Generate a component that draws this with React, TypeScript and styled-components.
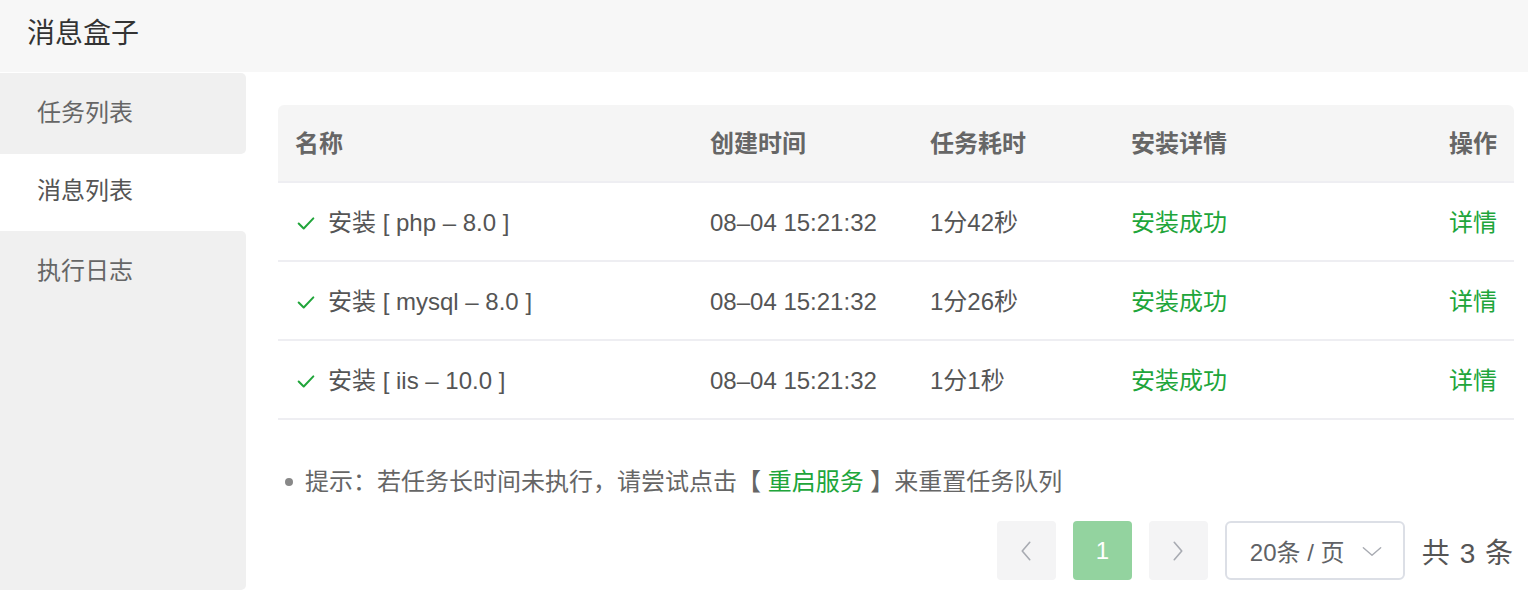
import styled, { createGlobalStyle } from 'styled-components'

const GREEN = '#20a53a'

const GlobalStyle = createGlobalStyle`
    html, body {
        margin: 0;
        padding: 0;
        background: #ffffff;
        overflow: hidden;
    }
    * {
        box-sizing: border-box;
    }
    body {
        font-family: "Liberation Sans", "Noto Sans CJK SC", sans-serif;
        color: #666666;
    }
`

interface Task {
    name: string
    created: string
    cost: string
}

const tasks: Task[] = [
    { name: '安装 [ php – 8.0 ]', created: '08–04 15:21:32', cost: '1分42秒' },
    { name: '安装 [ mysql – 8.0 ]', created: '08–04 15:21:32', cost: '1分26秒' },
    { name: '安装 [ iis – 10.0 ]', created: '08–04 15:21:32', cost: '1分1秒' },
]

const menu = ['任务列表', '消息列表', '执行日志']

const CheckIcon = () => (
    <svg width="22" height="22" viewBox="0 0 24 24" fill="none" stroke={GREEN} strokeWidth="2.2" strokeLinecap="round" strokeLinejoin="round">
        <polyline points="4 12.5 9.5 18 20 7" />
    </svg>
)

const Chevron = ({ dir, size = 30 }: { dir: 'left' | 'right' | 'down'; size?: number }) => {
    const points = dir === 'left' ? '15 5 9 12 15 19' : dir === 'right' ? '9 5 15 12 9 19' : '4 9 12 16 20 9'
    return (
        <svg width={size} height={size} viewBox="0 0 24 24" fill="none" stroke="#a8abb2" strokeWidth="1.3" strokeLinecap="round" strokeLinejoin="round">
            <polyline points={points} />
        </svg>
    )
}

const App = () => {
    return (<Page>
        <GlobalStyle />
        <TopBar>消息盒子</TopBar>
        <Body>
            <Sidebar>
                {menu.map((item, i) => (
                    <MenuItem key={item} $active={i === 1} $last={i === menu.length - 1}>{item}</MenuItem>
                ))}
            </Sidebar>
            <Main>
                <Table>
                    <HeadRow>
                        <HeadCell>名称</HeadCell>
                        <HeadCell>创建时间</HeadCell>
                        <HeadCell>任务耗时</HeadCell>
                        <HeadCell>安装详情</HeadCell>
                        <HeadCell $right>操作</HeadCell>
                    </HeadRow>
                    {tasks.map(t => (
                        <Row key={t.name}>
                            <Cell>
                                <CheckIcon />
                                <span>{t.name}</span>
                            </Cell>
                            <Cell>{t.created}</Cell>
                            <Cell>{t.cost}</Cell>
                            <Cell $green>安装成功</Cell>
                            <Cell $green $right>详情</Cell>
                        </Row>
                    ))}
                </Table>
                <Tip>
                    <Dot />
                    提示：若任务长时间未执行，请尝试点击【 <Link>重启服务</Link> 】来重置任务队列
                </Tip>
                <Pager>
                    <PageBtn><Chevron dir="left" /></PageBtn>
                    <PageBtn $current>1</PageBtn>
                    <PageBtn><Chevron dir="right" /></PageBtn>
                    <SizeSelect>
                        <span>20条 / 页</span>
                        <Chevron dir="down" size={26} />
                    </SizeSelect>
                    <Total>共 3 条</Total>
                </Pager>
            </Main>
        </Body>
    </Page>)
}

const Page = styled.div`
    display: flex;
    flex-direction: column;
    width: 1528px;
    height: 590px;
`
const TopBar = styled.div`
    height: 72px;
    flex-shrink: 0;
    display: flex;
    align-items: center;
    padding: 0 0 10px 27px;
    background: #f7f7f7;
    color: #333333;
    font-size: 28px;
`
const Body = styled.div`
    flex: 1;
    display: flex;
    min-height: 0;
    padding-top: 1px;
`
const Sidebar = styled.div`
    width: 246px;
    flex-shrink: 0;
    display: flex;
    flex-direction: column;
    background: #ffffff;
`
const MenuItem = styled.div<{ $active?: boolean; $last?: boolean }>`
    height: ${p => (p.$active ? '77px' : '81px')};
    flex: ${p => (p.$last ? '1' : 'none')};
    padding: ${p => (p.$active ? '21px' : '24px')} 0 0 37px;
    font-size: 24px;
    line-height: 32px;
    color: ${p => (p.$active ? '#555555' : '#666666')};
    background: ${p => (p.$active ? '#ffffff' : '#f0f0f0')};
    border-radius: 0 5px 5px 0;
`
const Main = styled.div`
    flex: 1;
    display: flex;
    flex-direction: column;
    padding: 32px 14px 0 32px;
`
const Table = styled.div`
    display: flex;
    flex-direction: column;
`
const columns = `
    display: grid;
    grid-template-columns: 415px 220px 201px 1fr 120px;
`
const HeadRow = styled.div`
    ${columns}
    height: 78px;
    background: #f5f5f5;
    border-radius: 6px 6px 0 0;
    border-bottom: 2px solid #eeeef2;
`
const HeadCell = styled.div<{ $right?: boolean }>`
    display: flex;
    align-items: center;
    justify-content: ${p => (p.$right ? 'flex-end' : 'flex-start')};
    padding: 2px 17px 0;
    font-size: 24px;
    line-height: 32px;
    font-weight: bold;
    color: #666666;
`
const Row = styled.div`
    ${columns}
    height: 79px;
    border-bottom: 2px solid #eeeef2;
`
const Cell = styled.div<{ $green?: boolean; $right?: boolean }>`
    display: flex;
    align-items: center;
    justify-content: ${p => (p.$right ? 'flex-end' : 'flex-start')};
    gap: 11px;
    padding: 3px 17px 0;
    font-size: 24px;
    line-height: 32px;
    color: ${p => (p.$green ? GREEN : '#555555')};
    white-space: nowrap;
`
const Tip = styled.div`
    display: flex;
    align-items: center;
    margin-top: 46px;
    padding-left: 7px;
    font-size: 24px;
    line-height: 32px;
    color: #666666;
    white-space: pre;
`
const Dot = styled.span`
    width: 8px;
    height: 8px;
    border-radius: 50%;
    background: #888888;
    margin-right: 12px;
`
const Link = styled.span`
    color: ${GREEN};
`
const Pager = styled.div`
    display: flex;
    justify-content: flex-end;
    align-items: center;
    gap: 17px;
    margin-top: 23px;
`
const PageBtn = styled.div<{ $current?: boolean }>`
    width: 59px;
    height: 59px;
    display: flex;
    align-items: center;
    justify-content: center;
    border-radius: 4px;
    background: ${p => (p.$current ? '#93d39f' : '#f4f4f5')};
    color: #ffffff;
    font-size: 24px;
`
const SizeSelect = styled.div`
    width: 180px;
    height: 59px;
    display: flex;
    align-items: center;
    justify-content: space-between;
    padding: 0 18px 0 23px;
    border: 2px solid #dcdfe6;
    border-radius: 6px;
    font-size: 24px;
    color: #606266;
`
const Total = styled.div`
    font-size: 28px;
    color: #555555;
    letter-spacing: 1px;
`

export default App
